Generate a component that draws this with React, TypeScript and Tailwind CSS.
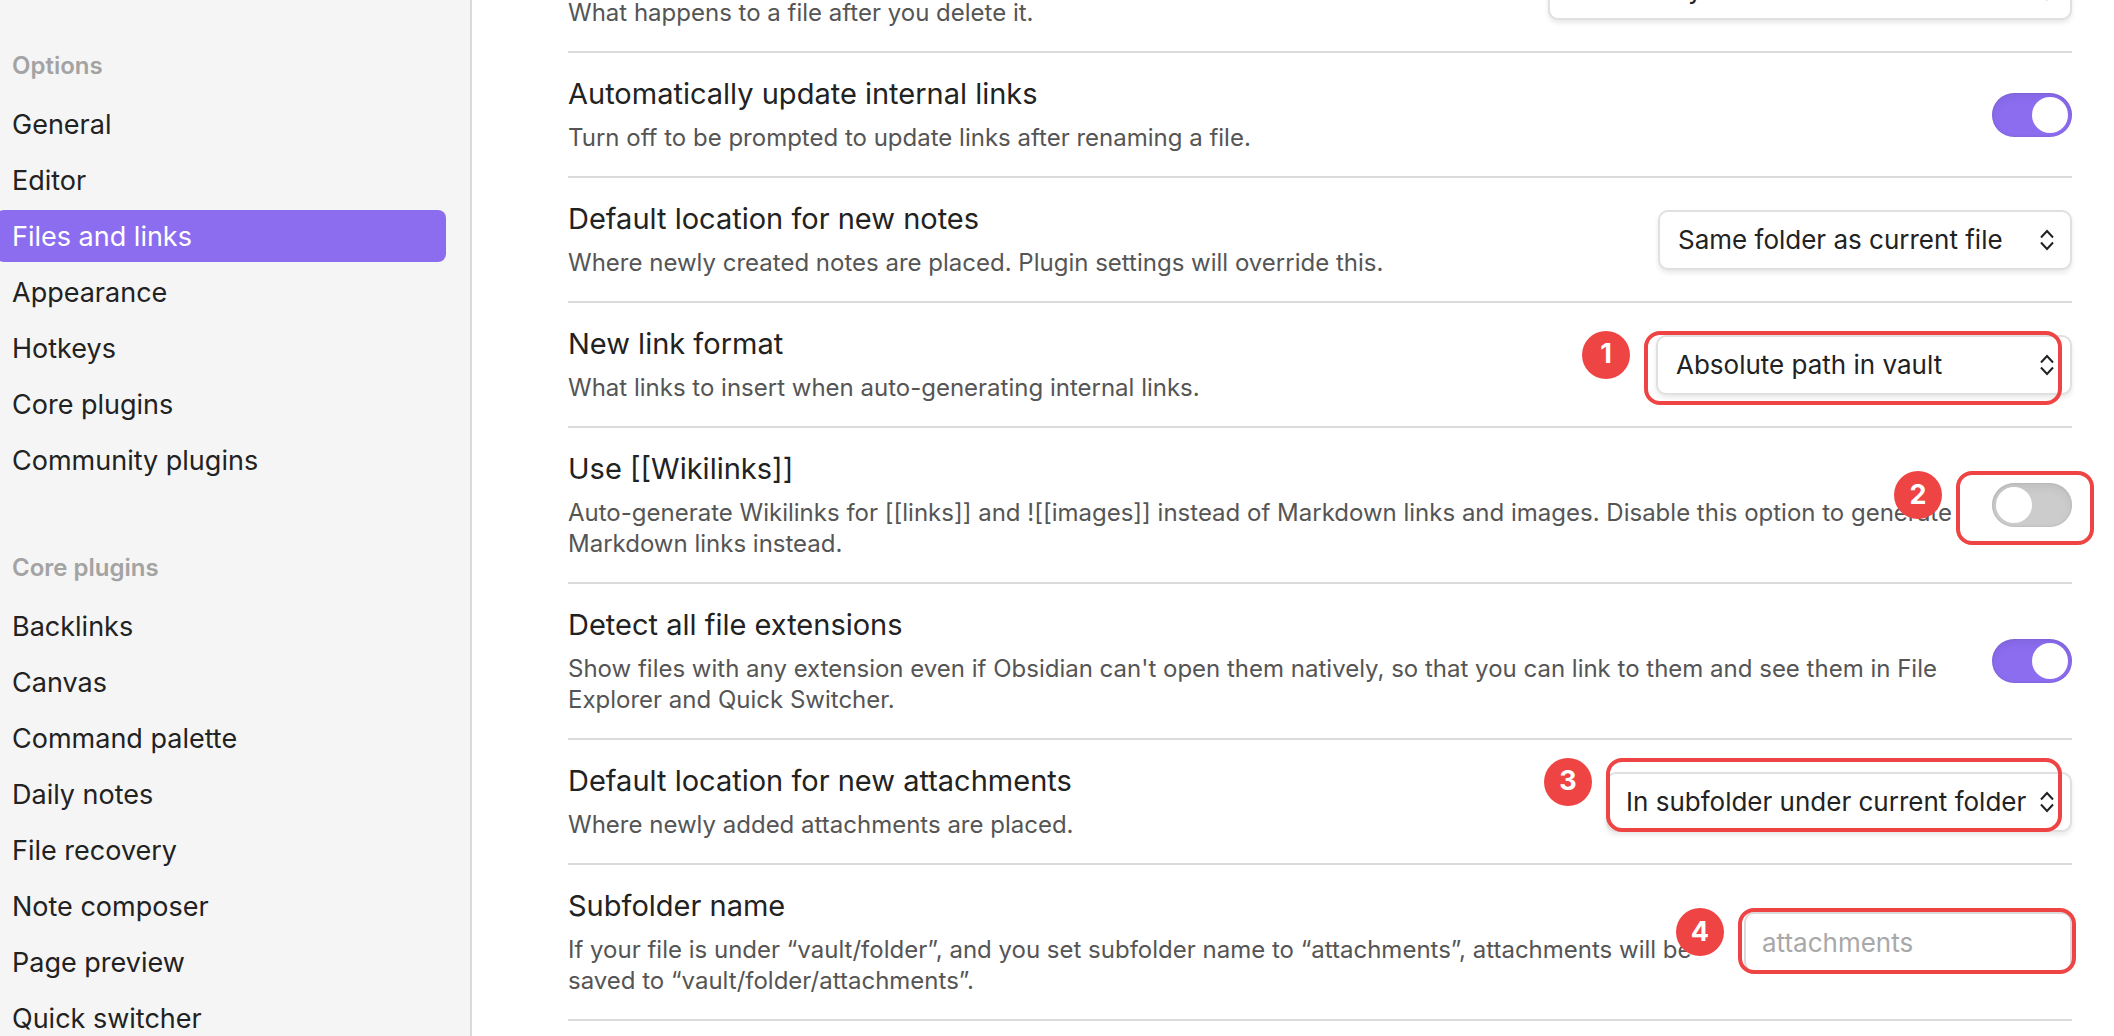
import { useId } from "react";
import type { ReactNode } from "react";

const NAV = [
  {
    title: "Options",
    items: ["General", "Editor", "Files and links", "Appearance", "Hotkeys", "Core plugins", "Community plugins"],
  },
  {
    title: "Core plugins",
    items: [
      "Backlinks",
      "Canvas",
      "Command palette",
      "Daily notes",
      "File recovery",
      "Note composer",
      "Page preview",
      "Quick switcher",
    ],
  },
];

const ACTIVE = "Files and links";

function Sidebar() {
  return (
    <nav className="flex w-[472px] shrink-0 flex-col gap-16 overflow-hidden border-r-2 border-[#dadada] bg-[#f5f5f5] pt-12 pr-6">
      {NAV.map((section) => (
        <section key={section.title} className="-ml-1 flex flex-col gap-3.5">
          <h2 className="pl-4 text-[24px] leading-9 font-semibold text-[#a3a3a3]">{section.title}</h2>
          <ul className="flex flex-col gap-1">
            {section.items.map((item) => (
              <li key={item}>
                <button
                  type="button"
                  className={
                    item === ACTIVE
                      ? "block h-13 w-full rounded-lg bg-[#8c6df0] pt-0.5 pl-4 text-left text-[27px] leading-9 text-white"
                      : "block h-13 w-full rounded-lg pt-0.5 pl-4 text-left text-[27px] leading-9 text-[#222222]"
                  }
                >
                  {item}
                </button>
              </li>
            ))}
          </ul>
        </section>
      ))}
    </nav>
  );
}

function Callout({ step, className }: { step: number; className: string }) {
  return (
    <div className={`pointer-events-none absolute rounded-2xl border-4 border-[#ef4444] ${className}`}>
      <span className="absolute -top-1 -left-[66px] flex size-12 items-center justify-center rounded-full bg-[#ef4444] text-[27px] font-bold text-white">
        {step}
      </span>
    </div>
  );
}

type RowProps = {
  title: string;
  description: string;
  control: (ids: { id: string; describedBy: string }) => ReactNode;
  callout?: ReactNode;
};

function SettingRow({ title, description, control, callout }: RowProps) {
  const id = useId();
  const describedBy = `${id}-description`;
  return (
    <div className="flex items-center gap-8 border-t-2 border-[#dadada] py-[23px]">
      <div className="flex min-w-0 flex-1 flex-col gap-2.5">
        <label htmlFor={id} className="text-[29px] leading-9 text-[#222222]">
          {title}
        </label>
        <p id={describedBy} className="text-[24px] leading-[31px] text-[#555555]">
          {description}
        </p>
      </div>
      <div className="relative -my-2 shrink-0">
        {control({ id, describedBy })}
        {callout}
      </div>
    </div>
  );
}

function Toggle({ id, describedBy, on }: { id: string; describedBy: string; on: boolean }) {
  return (
    <input
      id={id}
      aria-describedby={describedBy}
      type="checkbox"
      role="switch"
      defaultChecked={on}
      className="block h-11 w-20 appearance-none rounded-full bg-[#cccccc] p-1 shadow-[inset_0_4px_10px_rgba(0,0,0,0.07),inset_0_0_2px_rgba(0,0,0,0.15)] before:block before:size-9 before:rounded-full before:bg-white checked:bg-[#8c6df0] checked:before:translate-x-9"
    />
  );
}

function Dropdown({
  id,
  describedBy,
  options,
  width,
}: {
  id: string;
  describedBy: string;
  options: string[];
  width: string;
}) {
  return (
    <div className="relative">
      <select
        id={id}
        aria-describedby={describedBy}
        className={`block h-15 appearance-none rounded-[10px] border-2 border-[#e0e0e0] bg-white pr-10 pl-[18px] text-[26px] leading-9 text-[#222222] shadow-[0_3px_5px_rgba(0,0,0,0.09)] ${width}`}
      >
        {options.map((option) => (
          <option key={option}>{option}</option>
        ))}
      </select>
      <svg
        viewBox="0 0 14 22"
        fill="none"
        stroke="#222222"
        strokeWidth="2"
        aria-hidden="true"
        className="pointer-events-none absolute top-[19px] right-[18px] h-[22px] w-[14px]"
      >
        <path d="M1 8.5 7 2l6 6.5M1 13.5 7 20l6-6.5" />
      </svg>
    </div>
  );
}

export default function App() {
  return (
    <div className="flex h-screen overflow-hidden bg-white font-['Inter',sans-serif]">
      <Sidebar />
      <main className="min-w-0 flex-1 overflow-hidden pr-[42px] pl-24">
        <div className="-mt-[74px] flex flex-col border-b-2 border-[#dadada]">
          <SettingRow
            title="Deleted files"
            description="What happens to a file after you delete it."
            control={(ids) => (
              <Dropdown
                {...ids}
                width="w-[524px]"
                options={["Move to system trash", "Move to Obsidian trash (.trash folder)", "Permanently delete"]}
              />
            )}
          />
          <SettingRow
            title="Automatically update internal links"
            description="Turn off to be prompted to update links after renaming a file."
            control={(ids) => <Toggle {...ids} on />}
          />
          <SettingRow
            title="Default location for new notes"
            description="Where newly created notes are placed. Plugin settings will override this."
            control={(ids) => (
              <Dropdown
                {...ids}
                width="w-[414px]"
                options={["Same folder as current file", "Vault folder", "In the folder specified below"]}
              />
            )}
          />
          <SettingRow
            title="New link format"
            description="What links to insert when auto-generating internal links."
            control={(ids) => (
              <Dropdown
                {...ids}
                width="w-[416px]"
                options={["Absolute path in vault", "Relative path to file", "Shortest path when possible"]}
              />
            )}
            callout={<Callout step={1} className="-top-1 right-[10px] -bottom-[10px] -left-3" />}
          />
          <SettingRow
            title="Use [[Wikilinks]]"
            description="Auto-generate Wikilinks for [[links]] and ![[images]] instead of Markdown links and images. Disable this option to generate Markdown links instead."
            control={(ids) => <Toggle {...ids} on={false} />}
            callout={<Callout step={2} className="-top-3 -right-[22px] -bottom-[18px] -left-9" />}
          />
          <SettingRow
            title="Detect all file extensions"
            description="Show files with any extension even if Obsidian can't open them natively, so that you can link to them and see them in File Explorer and Quick Switcher."
            control={(ids) => <Toggle {...ids} on />}
          />
          <SettingRow
            title="Default location for new attachments"
            description="Where newly added attachments are placed."
            control={(ids) => (
              <Dropdown
                {...ids}
                width="w-[466px]"
                options={["In subfolder under current folder", "Vault folder", "Same folder as current file"]}
              />
            )}
            callout={<Callout step={3} className="-top-[14px] right-[10px] bottom-0 left-0" />}
          />
          <SettingRow
            title="Subfolder name"
            description="If your file is under “vault/folder”, and you set subfolder name to “attachments”, attachments will be saved to “vault/folder/attachments”."
            control={({ id, describedBy }) => (
              <input
                id={id}
                aria-describedby={describedBy}
                type="text"
                placeholder="attachments"
                className="block h-15 w-[328px] rounded-[10px] border-2 border-[#dadada] bg-white px-4 text-[26px] leading-9 text-[#222222] placeholder:text-[#a8a8a8]"
              />
            )}
            callout={<Callout step={4} className="-top-1 -right-1 -bottom-[2px] -left-[6px]" />}
          />
        </div>
      </main>
    </div>
  );
}
